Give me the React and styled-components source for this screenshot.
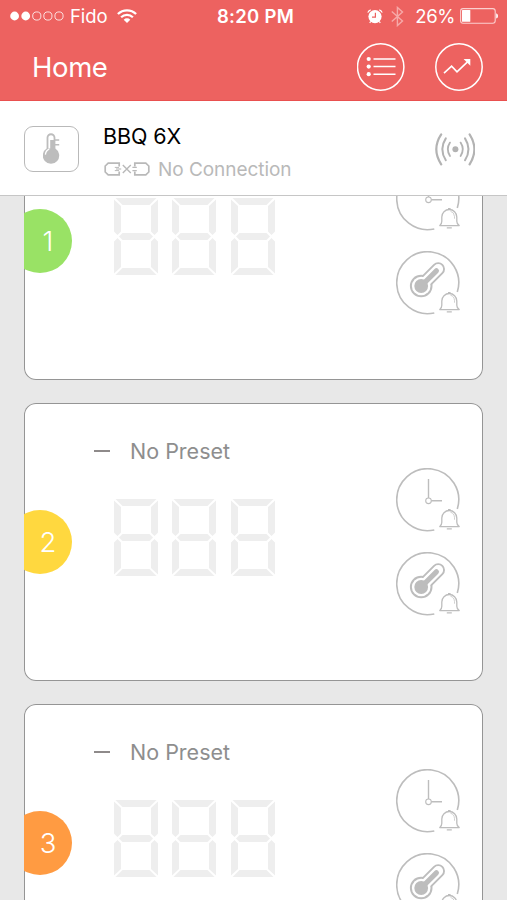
import React from "react";
import styled, { createGlobalStyle } from "styled-components";

const GlobalStyle = createGlobalStyle`
  * {
    box-sizing: border-box;
  }
  body {
    margin: 0;
    overflow: hidden;
    font-family: Inter, "Liberation Sans", sans-serif;
  }
  svg {
    display: block;
    flex: none;
  }
`;

const Screen = styled.div`
  display: flex;
  flex-direction: column;
  width: 507px;
  height: 900px;
  overflow: hidden;
  background: #e8e8e8;
`;

const Header = styled.header`
  flex: none;
  height: 101px;
  background: #ed6260;
  border-bottom: 1px solid #e9504f;
  color: #fff;
`;

const StatusBar = styled.div`
  display: grid;
  grid-template-columns: 1fr auto 1fr;
  align-items: center;
  height: 32px;
  padding: 0 9px 0 10px;
  font-size: 18.5px;
`;

const StatusGroup = styled.div`
  display: flex;
  align-items: center;
  justify-content: ${(props) => (props.$end ? "flex-end" : "flex-start")};
`;

const Carrier = styled.span`
  margin: 0 10px 0 6px;
  letter-spacing: -0.1px;
`;

const Time = styled.span`
  padding-left: 3px;
  font-weight: 600;
  letter-spacing: 0.3px;
`;

const Battery = styled.span`
  margin: 0 5px 0 11px;
  letter-spacing: -0.4px;
`;

const NavBar = styled.div`
  display: flex;
  align-items: center;
  height: 70px;
  padding: 0 24px 0 32px;
`;

const Title = styled.h1`
  flex: 1;
  margin: 0;
  font-size: 27.5px;
  font-weight: 400;
  letter-spacing: -0.4px;
`;

const RoundButton = styled.button`
  width: 48px;
  height: 48px;
  margin-left: 30px;
  padding: 0;
  border: 0;
  background: none;
  color: #fff;
`;

const DeviceBar = styled.section`
  display: flex;
  flex: none;
  align-items: center;
  height: 95px;
  padding: 0 32px 0 24px;
  background: #fff;
  border-bottom: 1px solid #c6c6c6;
`;

const DeviceIcon = styled.div`
  display: flex;
  align-items: center;
  justify-content: center;
  width: 55px;
  height: 46px;
  margin-top: 1px;
  border: 1px solid #b9b9b9;
  border-radius: 9px;
`;

const DeviceInfo = styled.div`
  flex: 1;
  margin: 8px 0 0 24px;
`;

const DeviceName = styled.div`
  height: 34px;
  font-size: 21.5px;
  line-height: 28px;
  letter-spacing: -0.1px;
  color: #000;
`;

const Connection = styled.div`
  display: flex;
  align-items: center;
  height: 26px;
  margin-left: 1px;
  font-size: 19px;
  letter-spacing: -0.05px;
  color: #b9b9b9;

  span {
    margin-left: 8px;
  }
`;

const Signal = styled.div`
  margin-top: 2px;
`;

const ProbeList = styled.main`
  flex: 1;
  min-height: 0;
  padding: 0 24px;
  overflow: hidden;
`;

/* the list is scrolled part of the way through the first probe */
const Scrolled = styled.div`
  display: flex;
  flex-direction: column;
  gap: 23px;
  margin-top: -94px;
`;

/* outlined with an inset shadow so that the badge can cover the edge */
const Card = styled.article`
  display: grid;
  grid-template-columns: 89.7px 1fr 64px;
  flex: none;
  height: 278px;
  padding-right: 23px;
  overflow: hidden;
  background: #fff;
  border-radius: 12px;
  box-shadow: inset 0 0 0 1px #959595;
`;

const Badge = styled.div`
  align-self: center;
  width: 64px;
  height: 64px;
  margin-left: -16.5px;
  padding-left: 17px;
  border-radius: 50%;
  background: ${(props) => props.$color};
  color: #fff;
  font-size: 27.5px;
  font-weight: 300;
  line-height: 64px;
  text-align: center;
`;

const Reading = styled.div`
  padding-top: 32px;
`;

const Preset = styled.div`
  display: flex;
  align-items: center;
  height: 32px;
  margin-left: -19.7px;
  font-size: 21.5px;
  color: #8e8e8e;
`;

const Dash = styled.i`
  width: 16px;
  height: 2px;
  margin-right: 20px;
  background: #8e8a8a;
`;

const Digits = styled.div`
  display: flex;
  gap: 14.7px;
  margin-top: 32px;
`;

const Alarms = styled.div`
  display: flex;
  flex-direction: column;
  gap: 20px;
  padding-top: 65px;
`;

const GRAY = "#bdbdbd";

function SignalDots() {
  return (
    <svg width="54" height="10" viewBox="0 0 54 10" fill="none" stroke="#fff">
      <circle cx="4.6" cy="5" r="4.4" fill="#fff" stroke="none" />
      <circle cx="15.7" cy="5" r="4.4" fill="#fff" stroke="none" />
      <circle cx="26.8" cy="5" r="4.1" strokeWidth="0.8" />
      <circle cx="37.9" cy="5" r="4.1" strokeWidth="0.8" />
      <circle cx="49" cy="5" r="4.1" strokeWidth="0.8" />
    </svg>
  );
}

function Wifi() {
  return (
    <svg width="20" height="14" viewBox="0 0 20 14" fill="none" stroke="#fff">
      <path d="M.9 5A13 13 0 0 1 19.1 5" strokeWidth="2.3" />
      <path d="M4.1 8.3a8.4 8.4 0 0 1 11.8 0" strokeWidth="2.2" />
      <path d="M10 14 6.7 10.7a4.7 4.7 0 0 1 6.6 0Z" fill="#fff" stroke="none" />
    </svg>
  );
}

function AlarmClock() {
  return (
    <svg width="16" height="15" viewBox="0 0 16 15" fill="none" stroke="#fff">
      <circle cx="8" cy="7.6" r="6.6" fill="#fff" stroke="none" />
      <path d="M.8 3.7Q1.4 1.6 3.7.9M15.2 3.7Q14.6 1.6 12.3.9" strokeWidth="1.1" />
      <path d="m3.7 12.5-1 1.4M12.3 12.5l1 1.4" strokeWidth="1.2" />
      <path d="M8.4 3.8v4.3H5" stroke="#ed6260" strokeWidth="1.2" />
    </svg>
  );
}

function Bluetooth() {
  return (
    <svg
      width="13"
      height="21"
      viewBox="0 0 13 21"
      fill="none"
      stroke="#f6a9a8"
      strokeWidth="1.4"
      style={{ marginLeft: 8 }}
    >
      <path d="M.8 5.5 11.5 15 6.4 19.6V1.4L11.5 6 .8 15.5" />
    </svg>
  );
}

function BatteryIcon() {
  return (
    <svg width="38" height="16" viewBox="0 0 38 16">
      <rect x=".6" y=".6" width="34.6" height="14.6" rx="2.4" fill="none" stroke="#fbd0cf" strokeWidth="1.1" />
      <rect x="2" y="2" width="8.3" height="11.8" rx=".6" fill="#fff" />
      <path d="M36.2 5.2q1.8.6 1.8 2.7t-1.8 2.7Z" fill="#fff" />
    </svg>
  );
}

function MenuIcon() {
  return (
    <svg width="48" height="48" viewBox="0 0 48 48" fill="none" stroke="currentColor">
      <circle cx="23.7" cy="24" r="23.2" strokeWidth="1.5" />
      <path d="M16.5 16h22M16.5 23.6h22M16.5 31.2h22" strokeWidth="1.5" />
      <g fill="currentColor" stroke="none">
        <circle cx="11.7" cy="16" r="2.1" />
        <circle cx="11.7" cy="23.6" r="2.1" />
        <circle cx="11.7" cy="31.2" r="2.1" />
      </g>
    </svg>
  );
}

function ChartIcon() {
  return (
    <svg width="48" height="48" viewBox="0 0 48 48" fill="none" stroke="currentColor">
      <circle cx="24" cy="24" r="23.2" strokeWidth="1.5" />
      <path d="m9 30.2 7.6-7 5.4 5.6L33 18.4" strokeWidth="1.6" />
      <path d="M28.6 16h6.7v6.7Z" fill="currentColor" stroke="none" />
    </svg>
  );
}

function Thermometer() {
  return (
    <svg width="17" height="31" viewBox="0 0 17 31" fill={GRAY}>
      <path d="M3.6 4.6a4.4 4.4 0 0 1 8.8 0V15.6a8.2 8.2 0 1 1-8.8 0Z" />
      <path d="M5.4 15.5V4.8a2.6 2.6 0 0 1 5.2 0V7H7.2v8.5Z" fill="#fff" />
      <path d="M6.2 16.2Q2.7 17.8 2.4 21.6" fill="none" stroke="#fff" strokeWidth="1.3" />
      <path d="M11 6.2h5.2v1.6H11zM11 11h5.2v1.6H11z" />
    </svg>
  );
}

function Unplugged() {
  return (
    <svg width="46" height="14" viewBox="0 0 46 14" fill="none" stroke="#b9b9b9" strokeWidth="1.7">
      <path d="M15.2 4.4V1.2H4.2L1.2 4v6l3 2.8h11V9.6" />
      <path d="M10.8 5.4H15M10.8 8.6H15" strokeWidth="1" />
      <path d="M12 7h5.2" strokeWidth="1.1" />
      <path d="m18.8 3 8 8M26.8 3l-8 8" strokeWidth="1.4" />
      <path d="M30.8 4.4V1.2h11l3 2.8v6l-3 2.8h-11V9.6" />
      <path d="M28.4 5.4h4.4M28.4 8.6h4.4" strokeWidth="1.1" />
    </svg>
  );
}

function Broadcast() {
  return (
    <svg width="40" height="33" viewBox="0 0 40 33" fill="none" stroke="#b3b3b3" strokeLinecap="round">
      <circle cx="20.4" cy="16.3" r="3" fill="#b3b3b3" stroke="none" />
      <path d="M15 9.6q-4.4 6.7 0 13.4M25.6 9.6q4.4 6.7 0 13.4" strokeWidth="1.8" />
      <path d="M10.8 5.4q-7 10.8 0 21.8M30 5.4q7 10.8 0 21.8" strokeWidth="2" />
      <path d="M6.2 1.3q-9.8 14.8 0 30M34.6 1.3q9.6 14.8 0 30" strokeWidth="2.2" />
    </svg>
  );
}

function Digit() {
  return (
    <svg width="44" height="77" viewBox="0 0 44 77" fill="#eee">
      <path d="M1.5 0h41l-7 7h-27z" />
      <path d="M0 1.5 7 8v25.5L3.5 37 0 33.5zM44 1.5 37 8v25.5l3.5 3.5 3.5-3.5z" />
      <path d="M8.5 35h27l3.5 3.5-3.5 3.5h-27L5 38.5z" />
      <path d="M0 75.5 7 69V43.5L3.5 40 0 43.5zM44 75.5 37 69V43.5l3.5-3.5 3.5 3.5z" />
      <path d="M1.5 77h41l-7-7h-27z" />
    </svg>
  );
}

// open ring with a small bell in the gap at the lower right
function AlarmRing({ children }) {
  return (
    <svg width="64" height="64" viewBox="0 0 64 64" fill="none" stroke={GRAY}>
      <path d="M61.3 41A31 31 0 1 0 38.3 62" strokeWidth="1.6" />
      {children}
      <g strokeWidth="1.3" strokeLinejoin="round">
        <path d="M43.8 58.6h19.4q-2.4-1.7-2.4-4.4V50a7.5 7.5 0 0 0-15 0v4.2q0 2.7-2 4.4Z" />
        <path d="M50.8 60.8h5M52 41.6h2.6" />
        <path d="M54.5 44.3q3.6.6 4 5.2v2.2" strokeWidth=".7" />
      </g>
    </svg>
  );
}

function TimerAlarm() {
  return (
    <AlarmRing>
      <path d="M32.5 11v19M35.3 32.8H46" strokeWidth="1.4" />
      <circle cx="32.5" cy="32.8" r="2.8" strokeWidth="1.1" />
    </AlarmRing>
  );
}

function TempAlarm() {
  return (
    <AlarmRing>
      <g strokeLinecap="round">
        <path d="M25.2 35 42.2 18" strokeWidth="13.6" />
        <circle cx="25.2" cy="35" r="11.3" fill={GRAY} stroke="none" />
        <path d="M25.2 35 42.2 18" stroke="#fff" strokeWidth="9.8" />
        <circle cx="25.2" cy="35" r="9.3" fill="#fff" stroke="none" />
        <path d="M25.2 35 40.4 19.8" strokeWidth="5.2" />
        <circle cx="25.2" cy="35" r="6.9" fill={GRAY} stroke="none" />
      </g>
    </AlarmRing>
  );
}

function Probe({ number, color, preset }) {
  return (
    <Card>
      <Badge $color={color}>{number}</Badge>
      <Reading>
        <Preset>
          {preset && <Dash />}
          {preset}
        </Preset>
        <Digits>
          <Digit />
          <Digit />
          <Digit />
        </Digits>
      </Reading>
      <Alarms>
        <TimerAlarm />
        <TempAlarm />
      </Alarms>
    </Card>
  );
}

const probes = [
  { number: 1, color: "#99e265" },
  { number: 2, color: "#ffd83f", preset: "No Preset" },
  { number: 3, color: "#ff9b42", preset: "No Preset" },
];

function App() {
  return (
    <Screen>
      <GlobalStyle />
      <Header>
        <StatusBar>
          <StatusGroup>
            <SignalDots />
            <Carrier>Fido</Carrier>
            <Wifi />
          </StatusGroup>
          <Time>8:20 PM</Time>
          <StatusGroup $end>
            <AlarmClock />
            <Bluetooth />
            <Battery>26%</Battery>
            <BatteryIcon />
          </StatusGroup>
        </StatusBar>
        <NavBar>
          <Title>Home</Title>
          <RoundButton>
            <MenuIcon />
          </RoundButton>
          <RoundButton>
            <ChartIcon />
          </RoundButton>
        </NavBar>
      </Header>
      <DeviceBar>
        <DeviceIcon>
          <Thermometer />
        </DeviceIcon>
        <DeviceInfo>
          <DeviceName>BBQ 6X</DeviceName>
          <Connection>
            <Unplugged />
            <span>No Connection</span>
          </Connection>
        </DeviceInfo>
        <Signal>
          <Broadcast />
        </Signal>
      </DeviceBar>
      <ProbeList>
        <Scrolled>
          {probes.map((probe) => (
            <Probe key={probe.number} {...probe} />
          ))}
        </Scrolled>
      </ProbeList>
    </Screen>
  );
}

export default App;
